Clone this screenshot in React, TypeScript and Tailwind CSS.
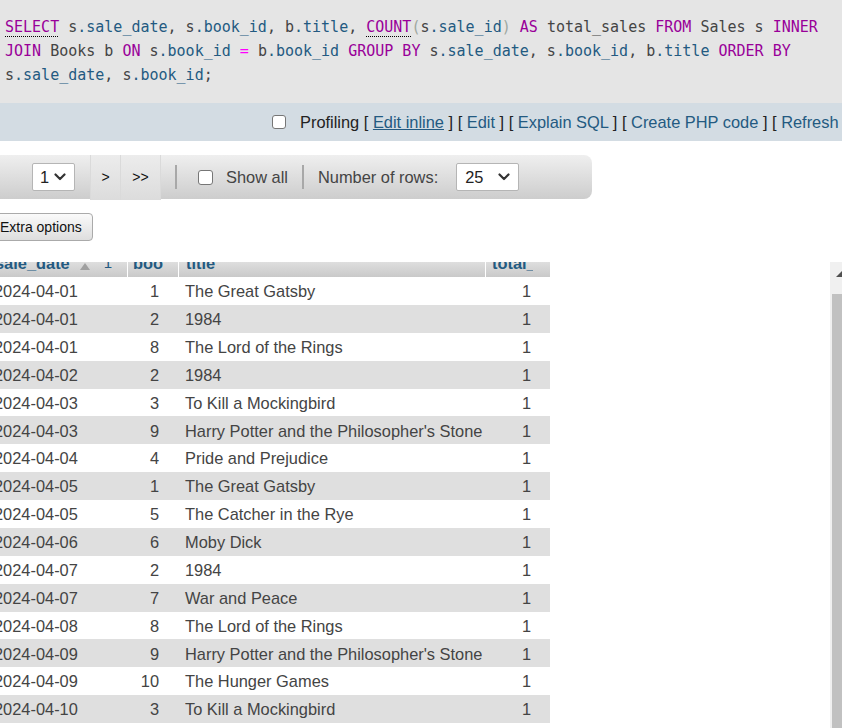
import React from 'react';

type Row = { date: string; id: number; title: string; total: number };

const rows: Row[] = [
    { date: '2024-04-01', id: 1, title: 'The Great Gatsby', total: 1 },
    { date: '2024-04-01', id: 2, title: '1984', total: 1 },
    { date: '2024-04-01', id: 8, title: 'The Lord of the Rings', total: 1 },
    { date: '2024-04-02', id: 2, title: '1984', total: 1 },
    { date: '2024-04-03', id: 3, title: 'To Kill a Mockingbird', total: 1 },
    { date: '2024-04-03', id: 9, title: "Harry Potter and the Philosopher's Stone", total: 1 },
    { date: '2024-04-04', id: 4, title: 'Pride and Prejudice', total: 1 },
    { date: '2024-04-05', id: 1, title: 'The Great Gatsby', total: 1 },
    { date: '2024-04-05', id: 5, title: 'The Catcher in the Rye', total: 1 },
    { date: '2024-04-06', id: 6, title: 'Moby Dick', total: 1 },
    { date: '2024-04-07', id: 2, title: '1984', total: 1 },
    { date: '2024-04-07', id: 7, title: 'War and Peace', total: 1 },
    { date: '2024-04-08', id: 8, title: 'The Lord of the Rings', total: 1 },
    { date: '2024-04-09', id: 9, title: "Harry Potter and the Philosopher's Stone", total: 1 },
    { date: '2024-04-09', id: 10, title: 'The Hunger Games', total: 1 },
    { date: '2024-04-10', id: 3, title: 'To Kill a Mockingbird', total: 1 },
];

const kw = 'text-[#990099]';
const fn = 'text-[#990099] underline decoration-dotted decoration-[#000] decoration-1 underline-offset-[4px]';
const col = 'text-[#235a81]';
const dim = 'text-[#444]';

function Chevron() {
    return (
        <svg width="12" height="8" viewBox="0 0 12 8" fill="none">
            <path d="M1.5 1.5 6 6l4.5-4.5" stroke="#333" strokeWidth="2.2" strokeLinecap="round" strokeLinejoin="round" />
        </svg>
    );
}

function SqlBox() {
    return (
        <div className="h-[103px] bg-[#e5e5e5] pl-[5px] pt-[15px] font-['DejaVu_Sans_Mono',monospace] text-[15px] leading-[24px] whitespace-pre">
            <div>
                <span className={fn}>SELECT</span> <span className={dim}>s</span>
                <span className={col}>.sale_date</span>
                <span className={dim}>, s</span>
                <span className={col}>.book_id</span>
                <span className={dim}>, b</span>
                <span className={col}>.title</span>
                <span className={dim}>, </span>
                <span className={fn}>COUNT</span>
                <span className="text-[#a0a8a0]">(</span>
                <span className={dim}>s</span>
                <span className={col}>.sale_id</span>
                <span className="text-[#a0a8a0]">)</span> <span className={kw}>AS</span>{' '}
                <span className={dim}>total_sales</span> <span className={kw}>FROM</span>{' '}
                <span className={dim}>Sales s</span> <span className={kw}>INNER</span>
            </div>
            <div>
                <span className={kw}>JOIN</span> <span className={dim}>Books b</span>{' '}
                <span className={kw}>ON</span> <span className={dim}>s</span>
                <span className={col}>.book_id</span> <span className="text-[#ff00ff]">=</span>{' '}
                <span className={dim}>b</span>
                <span className={col}>.book_id</span> <span className={kw}>GROUP BY</span>{' '}
                <span className={dim}>s</span>
                <span className={col}>.sale_date</span>
                <span className={dim}>, s</span>
                <span className={col}>.book_id</span>
                <span className={dim}>, b</span>
                <span className={col}>.title</span> <span className={kw}>ORDER BY</span>
            </div>
            <div>
                <span className={dim}>s</span>
                <span className={col}>.sale_date</span>
                <span className={dim}>, s</span>
                <span className={col}>.book_id</span>
                <span className={dim}>;</span>
            </div>
        </div>
    );
}

function ProfilingBar() {
    const link = 'text-[#235a81]';
    return (
        <div className="flex h-[38px] items-center bg-[#d3dce3] pl-[272px] text-[16.4px] whitespace-nowrap text-[#222]">
            <span className="h-[14px] w-[14px] shrink-0 rounded-[3px] border border-[#767676] bg-white" />
            <span className="ml-[14px]">
                Profiling [ <span className={`${link} underline`}>Edit inline</span> ] [{' '}
                <span className={link}>Edit</span> ] [ <span className={link}>Explain SQL</span> ] [{' '}
                <span className={link}>Create PHP code</span> ] [ <span className={link}>Refresh</span> ]
            </span>
        </div>
    );
}

function NavBar() {
    return (
        <div className="mt-[14px] flex h-[44px] w-[592px] items-center rounded-r-[8px] bg-linear-to-b from-[#efefef] to-[#cdcdcd] text-[16.4px] text-[#444]">
            <div className="ml-[32px] flex h-[28px] w-[43px] items-center justify-between rounded-[2px] border border-[#b5b5b5] bg-white pr-[8px] pl-[7px] text-[#222]">
                <span>1</span>
                <Chevron />
            </div>
            <div className="ml-[15px] flex h-[45px] self-start">
                <div className="flex w-[31px] items-center justify-center border-r border-l border-[#dadada] bg-linear-to-b from-[#ececec] to-[#dcdcdc] text-[14px] text-[#111]">
                    &gt;
                </div>
                <div className="flex w-[40px] items-center justify-center border-r border-[#dadada] bg-linear-to-b from-[#ececec] to-[#dcdcdc] text-[14px] text-[#111]">
                    &gt;&gt;
                </div>
            </div>
            <span className="ml-[14px] h-[24px] w-[2px] bg-[#a8a8a8]" />
            <span className="ml-[21px] h-[15px] w-[15px] rounded-[3px] border border-[#767676] bg-white" />
            <span className="ml-[13px]">Show all</span>
            <span className="ml-[14px] h-[24px] w-[2px] bg-[#a8a8a8]" />
            <span className="ml-[14px]">Number of rows:</span>
            <div className="ml-[18px] flex h-[28px] w-[63px] items-center justify-between rounded-[2px] border border-[#b5b5b5] bg-white pr-[8px] pl-[8px] text-[#222]">
                <span>25</span>
                <Chevron />
            </div>
        </div>
    );
}

const grid = 'grid grid-cols-[140px_51px_307px_64px]';

function ResultTable() {
    return (
        <div className="-ml-[12px] w-[562px]">
            <div className={`${grid} h-[15px] overflow-hidden bg-linear-to-b from-[#dedede] to-[#c9c9c9] text-[16.4px] leading-[18px] font-bold text-[#235a81]`}>
                <div className="-mt-[8px] flex items-start border-r border-white pl-[7px]">
                    <span>sale_date</span>
                    <svg className="mt-[9px] ml-[10px] shrink-0" width="10" height="7" viewBox="0 0 10 7">
                        <polygon points="5,0 10,7 0,7" fill="#a0a0a0" />
                    </svg>
                    <span className="ml-[14px] text-[15px] font-normal">1</span>
                </div>
                <div className="-mt-[8px] border-r border-white pr-[15px] pl-[5px]">
                    <div className="overflow-hidden whitespace-nowrap">book_id</div>
                </div>
                <div className="-mt-[8px] border-r border-white pl-[7px]">title</div>
                <div className="-mt-[8px] pr-[17px] pl-[6px]">
                    <div className="overflow-hidden whitespace-nowrap">total_sales</div>
                </div>
            </div>
            {rows.map((r, i) => (
                <div
                    key={i}
                    className={`${grid} h-[27.875px] items-center pt-[1px] text-[16.4px] text-[#444] ${i % 2 === 1 ? 'bg-[#dfdfdf]' : 'bg-white'}`}
                >
                    <div className="pl-[6px]">{r.date}</div>
                    <div className="pr-[20px] text-right">{r.id}</div>
                    <div className="pl-[6px] whitespace-nowrap">{r.title}</div>
                    <div className="pr-[19px] text-right">{r.total}</div>
                </div>
            ))}
        </div>
    );
}

function Scrollbar() {
    return (
        <div className="flex w-[12px] flex-col bg-[#f0f0f0] pl-[2px]">
            <svg className="mt-[8px] shrink-0" width="10" height="8" viewBox="0 0 10 8">
                <polygon points="4,7 11,0 18,7" fill="#505050" />
            </svg>
            <div className="mt-[16px] flex-1 bg-[#c1c1c1]" />
        </div>
    );
}

export default function App() {
    return (
        <div className="relative h-[728px] w-[842px] overflow-hidden bg-white font-['Liberation_Sans',Arial,sans-serif]">
            <SqlBox />
            <ProfilingBar />
            <NavBar />
            <div className="mt-[14px] flex">
                <button className="-ml-[11px] flex h-[28px] items-center rounded-[4px] border border-[#aaa] bg-linear-to-b from-[#fafafa] to-[#dedede] px-[10px] text-[14px] text-[#111]">
                    Extra options
                </button>
            </div>
            <div className="mt-[21px] flex h-[466px]">
                <div className="flex-1 overflow-hidden">
                    <ResultTable />
                </div>
                <Scrollbar />
            </div>
        </div>
    );
}
